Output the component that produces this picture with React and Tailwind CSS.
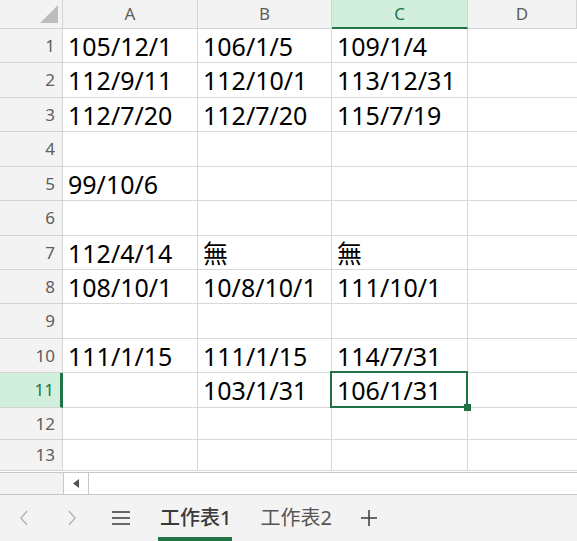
import React from 'react';

const cols = ['A', 'B', 'C', 'D'];

const data = [
  ['105/12/1', '106/1/5', '109/1/4'],
  ['112/9/11', '112/10/1', '113/12/31'],
  ['112/7/20', '112/7/20', '115/7/19'],
  ['', '', ''],
  ['99/10/6', '', ''],
  ['', '', ''],
  ['112/4/14', '無', '無'],
  ['108/10/1', '10/8/10/1', '111/10/1'],
  ['', '', ''],
  ['111/1/15', '111/1/15', '114/7/31'],
  ['', '103/1/31', '106/1/31'],
  ['', '', ''],
  ['', '', ''],
];

const font = { fontFamily: '"Noto Sans", "Noto Sans CJK TC", sans-serif' };

const App = () => {
  return (
    <div className="w-[577px] h-[541px] overflow-hidden bg-white flex flex-col" style={font}>
      <div className="grid grid-cols-[63px_135px_134px_136px_1fr] grid-rows-[29px_34px_35px_34px_35px_34px_35px_34px_34px_35px_34px_35px_32px_31px]">
        {/* corner */}
        <div className="bg-[#f3f3f3] border-r border-b border-[#d4d4d4] flex items-end justify-end pr-[4px] pb-[5px]">
          <svg width="18" height="18" viewBox="0 0 18 18">
            <polygon points="18,0 18,18 0,18" fill="#bdbdbd" />
          </svg>
        </div>
        {cols.map((c) => (
          <div
            key={c}
            className={
              c === 'C'
                ? 'bg-[#d2efdd] border-b-2 border-b-[#217346] border-r border-r-[#d4d4d4] flex items-center justify-center text-[17px] text-[#217346]'
                : 'bg-[#f3f3f3] border-b border-r border-[#d4d4d4] flex items-center justify-center text-[17px] text-[#5e5e5e]'
            }
          >
            {c}
          </div>
        ))}
        {data.map((row, i) => (
          <React.Fragment key={i}>
            <div
              className={
                i === 10
                  ? 'bg-[#d2efdd] border-r-[3px] border-r-[#217346] border-b border-b-[#d4d4d4] flex items-center justify-end pr-[6px] text-[17px] text-[#217346]'
                  : 'bg-[#f3f3f3] border-r border-b border-[#d4d4d4] flex items-center justify-end pr-[7px] text-[17px] text-[#5e5e5e]'
              }
            >
              {i + 1}
            </div>
            {row.map((v, j) => (
              <div
                key={j}
                className="relative border-r border-b border-[#d8d8d8] flex items-center pl-[5px] pt-[2px] text-[25px] text-black whitespace-nowrap"
              >
                {v}
                {i === 10 && j === 2 && (
                  <>
                    <div className="absolute -left-[2px] -top-[2px] -right-[1px] -bottom-[1px] border-2 border-[#217346] pointer-events-none" />
                    <div className="absolute z-10 -right-[4px] -bottom-[4px] w-[7px] h-[7px] bg-[#217346]" />
                  </>
                )}
              </div>
            ))}
            <div className="border-b border-[#d8d8d8]" />
          </React.Fragment>
        ))}
      </div>
      <div className="h-[23px] flex border-t border-b border-[#c8c8c8] mt-[1px]">
        <div className="w-[63px] bg-[#f3f3f3]" />
        <div className="w-[26px] border-l border-r border-[#c8c8c8] flex items-center justify-center">
          <svg width="6" height="9" viewBox="0 0 6 9">
            <polygon points="6,0 6,9 0,4.5" fill="#555" />
          </svg>
        </div>
        <div className="flex-1 bg-white" />
      </div>
      <div className="flex-1 bg-[#f3f3f3] flex items-center relative">
        <div className="w-[46px] flex justify-center ml-[1px]">
          <svg width="10" height="16" viewBox="0 0 10 16" fill="none" stroke="#b0b0b0" strokeWidth="1.3">
            <polyline points="8,1 2,8 8,15" />
          </svg>
        </div>
        <div className="w-[50px] flex justify-center">
          <svg width="10" height="16" viewBox="0 0 10 16" fill="none" stroke="#b0b0b0" strokeWidth="1.3">
            <polyline points="2,1 8,8 2,15" />
          </svg>
        </div>
        <div className="w-[48px] flex justify-center">
          <svg width="20" height="16" viewBox="0 0 20 16" fill="none" stroke="#444" strokeWidth="1.6">
            <line x1="1" y1="2" x2="19" y2="2" />
            <line x1="1" y1="8" x2="19" y2="8" />
            <line x1="1" y1="14" x2="19" y2="14" />
          </svg>
        </div>
        <div className="relative ml-[15px] h-full flex items-center">
          <span className="text-[20px] text-[#3a3a3a] font-medium">工作表1</span>
          <div className="absolute left-[-2px] right-[-1px] bottom-0 h-[4px] bg-[#217346]" />
        </div>
        <div className="ml-[29px] text-[20px] text-[#555]">工作表2</div>
        <div className="ml-[28px]">
          <svg width="18" height="18" viewBox="0 0 18 18" fill="none" stroke="#444" strokeWidth="1.6">
            <line x1="9" y1="1" x2="9" y2="17" />
            <line x1="1" y1="9" x2="17" y2="9" />
          </svg>
        </div>
      </div>
    </div>
  );
};

export default App;
